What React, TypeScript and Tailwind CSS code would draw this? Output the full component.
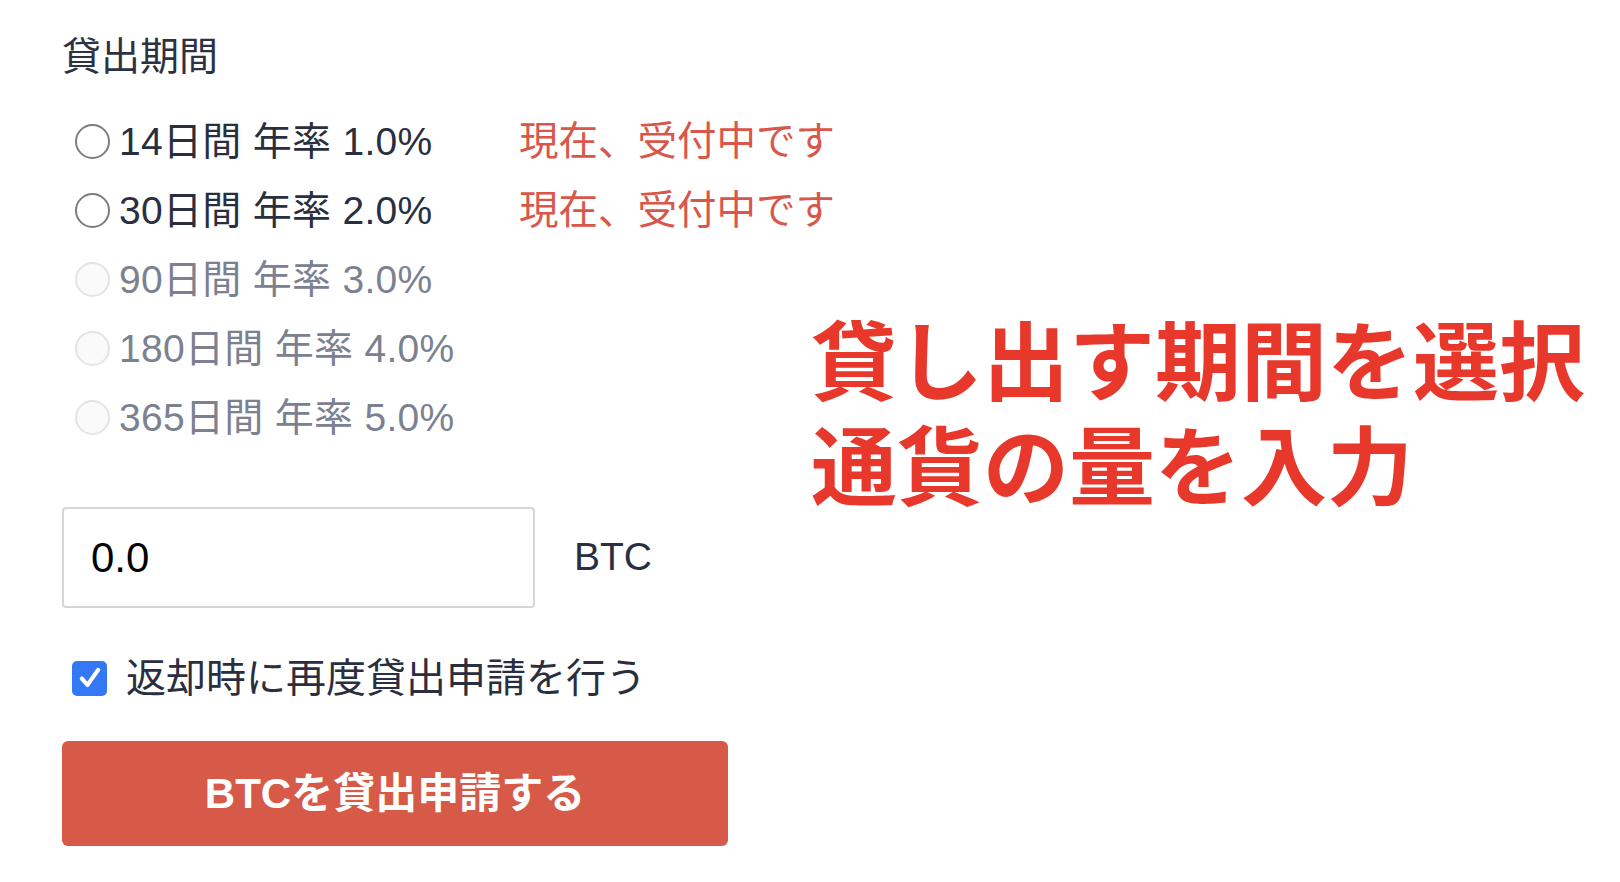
const periods = [
  { label: "14日間 年率 1.0%", open: true },
  { label: "30日間 年率 2.0%", open: true },
  { label: "90日間 年率 3.0%", open: false },
  { label: "180日間 年率 4.0%", open: false },
  { label: "365日間 年率 5.0%", open: false },
];

const Radio = ({ enabled }: { enabled: boolean }) => (
  <span
    className={
      enabled
        ? "block h-[35px] w-[35px] shrink-0 rounded-full border-[2px] border-[#7d7d7d] bg-white"
        : "block h-[35px] w-[35px] shrink-0 rounded-full border-[2px] border-[#e4e4e4] bg-[#fafafa]"
    }
  />
);

export default function App() {
  return (
    <div className="flex min-h-[882px] w-[1620px] bg-white font-['Liberation_Sans','Noto_Sans_CJK_JP',sans-serif]">
      <div className="w-[811px] shrink-0 pl-[62px] pt-[33px]">
        <h2 className="text-[39px] leading-[48px] text-[#2d3142]">貸出期間</h2>

        <div className="mt-[26px]">
          {periods.map((p) => (
            <div key={p.label} className="flex h-[69px] items-center pl-[13px]">
              <label className="flex w-[444px] shrink-0 items-center gap-[9px]">
                <Radio enabled={p.open} />
                <span
                  className={
                    p.open
                      ? "whitespace-nowrap text-[39px] leading-none tracking-[0.3px] text-[#2a2f3f]"
                      : "whitespace-nowrap text-[39px] leading-none tracking-[0.3px] text-[#7b8190]"
                  }
                >
                  {p.label}
                </span>
              </label>
              {p.open && (
                <span className="shrink-0 whitespace-nowrap text-[39.5px] leading-none text-[#d9574a]">
                  現在、受付中です
                </span>
              )}
            </div>
          ))}
        </div>

        <div className="mt-[55px] flex items-center gap-[39px]">
          <input
            defaultValue="0.0"
            className="h-[101px] w-[473px] rounded-[4px] border-[2px] border-[#d6d6d6] pl-[27px] text-[42px] text-black outline-none"
          />
          <span className="text-[39px] text-[#2a2f3f]">BTC</span>
        </div>

        <div className="mt-[50px] flex items-center gap-[19px] pl-[10px]">
          <span className="flex h-[35px] w-[35px] items-center justify-center rounded-[5px] bg-[#3478f6]">
            <svg viewBox="0 0 24 24" className="h-[30px] w-[30px]" fill="none" stroke="white" strokeWidth={3.4} strokeLinecap="round" strokeLinejoin="round">
              <path d="M5.5 12.5l4.5 5L18.5 5.5" />
            </svg>
          </span>
          <span className="whitespace-nowrap text-[40px] leading-none text-[#2a2f3f]">返却時に再度貸出申請を行う</span>
        </div>

        <button className="mt-[43px] flex h-[105px] w-[666px] items-center justify-center rounded-[6px] bg-[#d65a47] text-[42px] font-bold text-white">
          BTCを貸出申請する
        </button>
      </div>

      <div className="pt-[312px]">
        <p className="text-[86px] font-bold leading-[105px] text-[#e8382b]">
          貸し出す期間を選択
          <br />
          通貨の量を入力
        </p>
      </div>
    </div>
  );
}
